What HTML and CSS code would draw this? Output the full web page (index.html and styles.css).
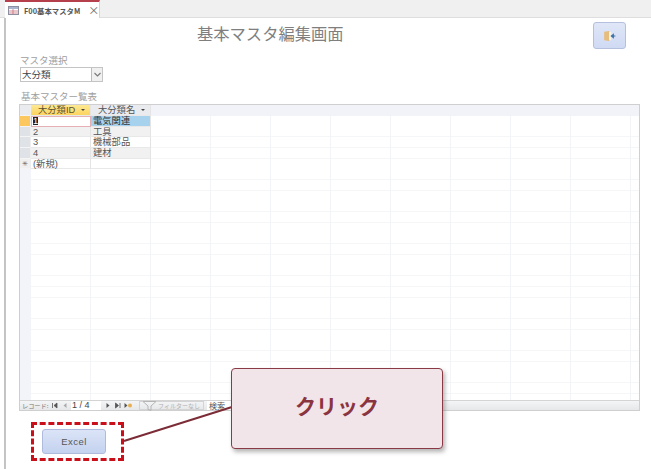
FILE: index.html
```html
<!DOCTYPE html>
<html lang="ja">
<head>
<meta charset="utf-8">
<title>F00基本マスタM</title>
<link rel="stylesheet" href="styles.css">
</head>
<body>
<div class="tabbar">
  <div class="tab">
    <svg class="tab-icon" width="11" height="9" viewBox="0 0 11 9"><rect x=".5" y=".5" width="10" height="8" fill="#fff" stroke="#8d8fa0"/><path d="M1 1h9v2H1z" fill="#a9b4d0"/><path d="M5 3v5M1 5h9M1 7h9" stroke="#c0606a" stroke-width=".7"/></svg>
    <span class="tab-name">F00基本マスタM</span>
    <span class="tab-close">×</span>
  </div>
</div>
<main class="form">
  <header class="form-head">
    <h1 class="title">基本マスタ編集画面</h1>
    <button class="exit-btn" aria-label="閉じる">
      <svg width="12" height="10" viewBox="0 0 14 12"><path d="M0 1l6-1v12l-6-1z" fill="#e6bd7c"/><path d="M6 1h2.500v10H6z" fill="#fbf6ea"/><path d="M13.500 6H9.500M11 4l-2.500 2 2.500 2z" stroke="#3f74a8" stroke-width="1.300" fill="#3f74a8"/></svg>
    </button>
  </header>
  <div class="field-label">マスタ選択</div>
  <div class="combo"><span class="combo-value">大分類</span><span class="combo-arrow"><svg width="7" height="5" viewBox="0 0 7 5"><path d="M.5 1l3 3 3-3" fill="none" stroke="#777" stroke-width="1.100"/></svg></span></div>
  <div class="list-label">基本マスター覧表</div>
  <section class="sheet">
    <div class="sheet-body">
      <div class="row head">
        <div class="sel corner"></div>
        <div class="cell hd active-hd"><span>大分類ID</span><i class="caret"></i></div>
        <div class="cell hd"><span>大分類名</span><i class="caret"></i></div>
      </div>
      <div class="row">
        <div class="sel active-sel"></div>
        <div class="cell focus"><span class="caret-num">1</span></div>
        <div class="cell picked">電気関連</div>
      </div>
      <div class="row alt">
        <div class="sel"></div>
        <div class="cell">2</div>
        <div class="cell">工具</div>
      </div>
      <div class="row">
        <div class="sel"></div>
        <div class="cell">3</div>
        <div class="cell">機械部品</div>
      </div>
      <div class="row alt">
        <div class="sel"></div>
        <div class="cell">4</div>
        <div class="cell">建材</div>
      </div>
      <div class="row">
        <div class="sel new-sel">✳</div>
        <div class="cell">(新規)</div>
        <div class="cell"></div>
      </div>
    </div>
    <div class="nav">
      <span class="nav-label">レコード:</span>
      <svg class="nav-btn first" width="11" height="7" viewBox="0 0 11 7"><path d="M3.500 1v5M8 1L5 3.500 8 6z" stroke="#555" stroke-width=".8" fill="#555"/></svg>
      <svg class="nav-btn" width="10" height="7" viewBox="0 0 10 7"><path d="M6.500 1l-3 2.500 3 2.500z" fill="#aaa"/></svg>
      <span class="nav-pos">1 / 4</span>
      <svg class="nav-btn next" width="10" height="7" viewBox="0 0 10 7"><path d="M3.500 1l3 2.500-3 2.500z" fill="#555"/></svg>
      <svg class="nav-btn" width="10" height="7" viewBox="0 0 10 7"><path d="M2.500 1l3 2.500-3 2.500zM7 1v5" stroke="#555" stroke-width=".8" fill="#555"/></svg>
      <svg class="nav-btn" width="10" height="7" viewBox="0 0 10 7"><path d="M1.500 1l3 2.500-3 2.500z" fill="#555"/><circle cx="7" cy="3.500" r="2" fill="#e8b050"/></svg>
      <span class="nav-filter">
        <svg class="filter-icon" width="15" height="10" viewBox="0 0 15 10"><path d="M1 .5h13L9 5V9.500l-3-1V5z" fill="none" stroke="#b5b5b5"/></svg><span class="filter-text">フィルターなし</span>
      </span>
      <span class="nav-search">検索</span>
    </div>
  </section>
  <div class="excel-frame">
    <button class="excel-btn">Excel</button>
  </div>
</main>

<svg class="leader" width="120" height="40" viewBox="0 0 120 40"><path d="M1 38L109 4" stroke="#7b2c36" stroke-width="2" fill="none"/></svg>
<div class="callout">クリック</div>
</body>
</html>
```
FILE: styles.css
```css
* { box-sizing: border-box; }
html, body { margin: 0; padding: 0; }
body {
  position: relative;
  width: 651px;
  height: 469px;
  overflow: hidden;
  background: #fff;
  font-family: "Noto Sans CJK JP", "Liberation Sans", sans-serif;
  color: #555;
}
.tabbar {
  height: 18px;
  padding-left: 5px;
  background: #f0f0f0;
  border-bottom: 1px solid #dedede;
}
.tab {
  display: flex;
  align-items: center;
  width: 95px;
  height: 18px;
  padding-left: 3px;
  background: #fff;
  border-top: 2px solid #b5404c;
  border-right: 1px solid #d6d6d6;
}
.tab-icon { margin-right: 5px; flex: none; }
.tab-name { font-size: 7.400px; font-weight: 700; color: #555; white-space: nowrap; }
.tab-close { margin-left: 8px; font-size: 11px; line-height: 12px; color: #666; }
.form {
  height: 451px;
  margin-left: 4px;
  padding-left: 13px;
  border-left: 2px solid #c4c4c4;
}
.form-head {
  display: flex;
  height: 31px;
  padding-top: 4px;
}
.title {
  width: 501px;
  margin: 0;
  padding-left: 178px;
  font-size: 16.300px;
  line-height: 22px;
  font-weight: 400;
  color: #7f7f7f;
  white-space: nowrap;
}
.exit-btn {
  display: flex;
  align-items: center;
  justify-content: center;
  width: 33px;
  height: 27px;
  margin-left: 73px;
  padding: 0;
  border: 1px solid #b4c0de;
  border-radius: 3px;
  background: linear-gradient(#dfe6f7, #cfdaf3);
}
.field-label {
  margin: 5px 0 0 1px;
  font-size: 9.500px;
  line-height: 12px;
  color: #a0a0a0;
}
.combo {
  display: flex;
  width: 83px;
  height: 15px;
  margin: 1px 0 0 1px;
  border: 1px solid #c4c4c4;
  background: #fff;
}
.combo-value { flex: 1; padding-left: 1px; font-size: 9.500px; line-height: 12px; color: #444; }
.combo-arrow {
  display: flex;
  align-items: center;
  justify-content: center;
  width: 11px;
  background: #f0f0f0;
  border-left: 1px solid #bbb;
}
.list-label {
  margin: 8px 0 0 2px;
  height: 14px;
  font-size: 9.500px;
  line-height: 13px;
  color: #a0a0a0;
}
.sheet {
  width: 621px;
  height: 307px;
  border: 1px solid #cfcfcf;
  display: flex;
  flex-direction: column;
}
.sheet-body {
  flex: 1;
  background-color: #fff;
  background-image:
    linear-gradient(to right, #f3f4f9 0 11px, transparent 11px),
    linear-gradient(#f2f2f9 0 11px, transparent 11px),
    repeating-linear-gradient(to right, transparent 0 59px, #f3f4f7 59px 60px),
    repeating-linear-gradient(to bottom, transparent 0 10px, #f5f6f8 10px 10.700px);
  background-position: 0 0, 0 0, 11px 0, 0 0;
}
.row { display: flex; height: 10.700px; }
.row.head { height: 11px; }
.sel {
  width: 11px;
  flex: none;
  background: #dfe3e8;
  border-bottom: 1px solid #f4f4f4;
  border-right: 1px solid #eee;
}
.corner { background: #e9ebef; }
.active-sel { background: #fbc75e; }
.new-sel {
  font-family: "Liberation Sans", "DejaVu Sans", sans-serif;
  font-size: 7px;
  line-height: 10px;
  text-align: center;
  color: #666;
  background: #f0f0f0;
}
.cell {
  width: 60px;
  flex: none;
  padding: 1px 0 0 2px;
  font-family: "Liberation Sans", "Noto Sans CJK JP", sans-serif;
  font-size: 9.300px;
  line-height: 9px;
  color: #555;
  background: #fff;
  border-right: 1px solid #e4e4e4;
  border-bottom: 1px solid #e8e8e8;
  white-space: nowrap;
}
.alt .cell { background: #f1f1f1; }
.cell.hd {
  display: flex;
  align-items: center;
  justify-content: space-between;
  padding: 0 5px 0 7px;
  background: #e9ebef;
}
.cell.active-hd { background: linear-gradient(#fde992, #fcd35f); color: #5c5030; }
.caret {
  width: 0;
  height: 0;
  border-left: 2px solid transparent;
  border-right: 2px solid transparent;
  border-top: 2px solid #444;
}
.focus { border: 1px solid #e5b0b5; padding: 0 0 0 1px; line-height: 8px; }
.caret-num { display: inline-block; background: #222; color: #fff; font-size: 9.300px; line-height: 8px; }
.cell.picked { background: #a6d2ee; color: #333; }
.nav {
  display: flex;
  align-items: center;
  height: 10px;
  flex: none;
  background: linear-gradient(#f4f5f7, #e6e7e9);
  border-top: 1px solid #d4d4d4;
  color: #777;
  white-space: nowrap;
}
.nav-label { padding-left: 2px; width: 29px; font-size: 6.200px; line-height: 9px; }
.nav-btn { flex: none; }
.nav-pos {
  width: 30px;
  height: 9px;
  margin: 0 2px 0 1px;
  padding-left: 1px;
  background: #fff;
  font-family: "Liberation Sans", sans-serif;
  font-size: 9px;
  line-height: 9px;
  color: #444;
}
.nav-filter {
  display: flex;
  align-items: center;
  width: 65px;
  height: 9px;
  margin-left: 6px;
  border: 1px solid #d4d4d4;
  padding-left: 2px;
}
.filter-icon { flex: none; margin-right: 1px; }
.filter-text { font-size: 6px; line-height: 8px; color: #b0b0b0; }
.nav-search {
  width: 40px;
  height: 9px;
  margin-left: 3px;
  padding-left: 2px;
  background: #fff;
  font-size: 8px;
  line-height: 9px;
  color: #555;
}
.excel-frame {
  width: 93px;
  height: 39px;
  margin: 11px 0 0 12px;
  padding: 4px 0 0 8px;
  border: 3px dashed #c9101a;
}
.excel-btn {
  display: block;
  width: 64px;
  height: 25px;
  padding: 0;
  border: 1px solid #aebbdc;
  border-radius: 3px;
  background: linear-gradient(#dbe4f7, #c4d2f0);
  font-family: "Liberation Sans", sans-serif;
  font-size: 9.500px;
  letter-spacing: .5px;
  color: #555;
}
.leader { position: absolute; left: 123px; top: 403px; }
.callout {
  position: absolute;
  left: 231px;
  top: 368px;
  width: 212px;
  height: 81px;
  display: flex;
  align-items: center;
  justify-content: center;
  padding-bottom: 7px;
  background: #f2e5e9;
  border: 1px solid #8a3a44;
  border-radius: 4px;
  box-shadow: 2px 3px 4px rgba(90, 90, 90, .45);
  font-size: 21px;
  font-weight: 700;
  color: #8a3440;
}
```
